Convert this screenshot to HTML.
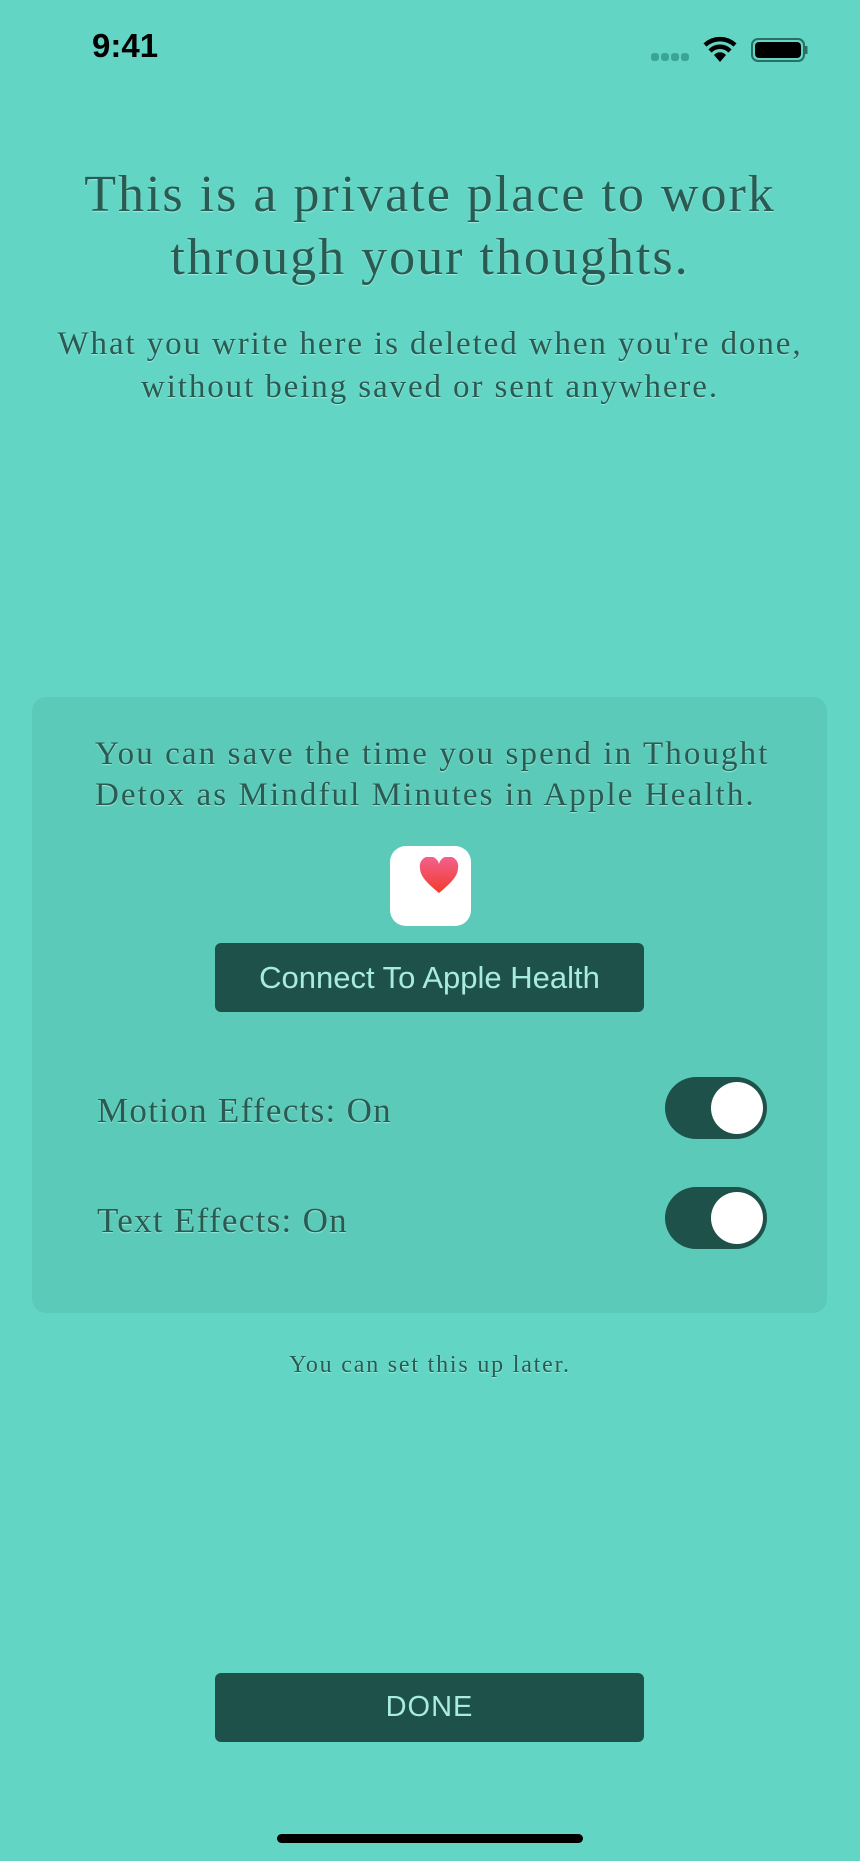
<!DOCTYPE html>
<html><head><meta charset="utf-8"><style>
*{margin:0;padding:0;box-sizing:border-box}
body{width:860px;height:1861px;background:#62d5c5;position:relative;overflow:hidden;font-family:"Liberation Serif",serif;color:#2b5a52}
.a{position:absolute}
.c{left:0;width:860px;text-align:center;white-space:nowrap}
.sh{text-shadow:0 1px 1px rgba(200,255,245,.6)}
.tog{position:absolute;width:102px;height:62px;border-radius:31px;background:#1f514b;left:665px}
.tog::after{content:"";position:absolute;right:4px;top:5px;width:52px;height:52px;border-radius:50%;background:#fff}
.btn{position:absolute;left:215px;width:429px;height:69px;background:#1f514b;border-radius:6px;color:#a8ecdf;font-family:"Liberation Sans",sans-serif;font-size:29px;text-align:center;line-height:69px}
</style></head><body>
<div class="a" style="left:92px;top:27px;font-family:'Liberation Sans',sans-serif;font-weight:bold;font-size:33px;color:#000">9:41</div>
<svg class="a" style="left:648px;top:34px" width="160" height="30" viewBox="0 0 160 30">
<g fill="#3aa596"><rect x="3" y="19" width="8" height="8" rx="3"/><rect x="13" y="19" width="8" height="8" rx="3"/><rect x="23" y="19" width="8" height="8" rx="3"/><rect x="33" y="19" width="8" height="8" rx="3"/></g>
<path d="M57 11 A22 22 0 0 1 87 11" stroke="#000" stroke-width="4.5" fill="none"/>
<path d="M62 17 A14 14 0 0 1 82 17" stroke="#000" stroke-width="4.5" fill="none"/>
<path d="M72 28 L66 21 A8 8 0 0 1 78 21 Z" fill="#000"/>
<rect x="104" y="5" width="52" height="22" rx="6" fill="none" stroke="#2a6e64" stroke-width="2"/>
<rect x="107" y="8" width="46" height="16" rx="4" fill="#000"/>
<rect x="157" y="12" width="2.5" height="8" fill="#2a6e64"/>
</svg>
<div class="a c sh" style="top:163px;font-size:52px;line-height:63px;letter-spacing:2px">This is a private place to work<br>through your thoughts.</div>
<div class="a c sh" style="top:323px;font-size:33px;line-height:43px;letter-spacing:1.9px">What you write here is deleted when you're done,<br>without being saved or sent anywhere.</div>
<div class="a" style="left:32px;top:697px;width:795px;height:616px;background:#5ccab9;border-radius:14px"></div>
<div class="a sh" style="left:95px;top:734px;font-size:33px;line-height:41px;letter-spacing:2.1px;white-space:nowrap">You can save the time you spend in Thought<br>Detox as Mindful Minutes in Apple Health.</div>
<div class="a" style="left:390px;top:846px;width:81px;height:80px;background:#fff;border-radius:16px"></div>
<svg class="a" style="left:419px;top:857px" width="40" height="38" viewBox="0 0 40 38"><defs><linearGradient id="g" x1="0" y1="0" x2="0" y2="1"><stop offset="0" stop-color="#f2628e"/><stop offset="1" stop-color="#f23b2c"/></linearGradient></defs><path d="M20 36 C8 26 1 19 1 11 A9.5 9.5 0 0 1 20 7 A9.5 9.5 0 0 1 39 11 C39 19 32 26 20 36Z" fill="url(#g)"/></svg>
<div class="btn" style="top:943px;font-size:31px">Connect To Apple Health</div>
<div class="a sh" style="left:97px;top:1091px;font-size:35px;letter-spacing:1.3px">Motion Effects: On</div>
<div class="tog" style="top:1077px"></div>
<div class="a sh" style="left:97px;top:1201px;font-size:35px;letter-spacing:1.3px">Text Effects: On</div>
<div class="tog" style="top:1187px"></div>
<div class="a c sh" style="top:1352px;font-size:24px;letter-spacing:1.8px">You can set this up later.</div>
<div class="btn" style="top:1673px;letter-spacing:1px">DONE</div>
<div class="a" style="left:277px;top:1834px;width:306px;height:9px;border-radius:5px;background:#000"></div>
</body></html>
